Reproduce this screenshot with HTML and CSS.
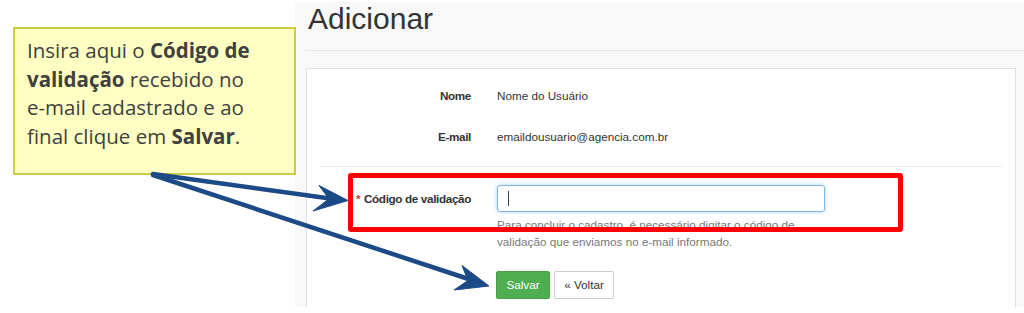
FILE: index.html
```html
<!DOCTYPE html>
<html lang="pt-BR">
<head>
<meta charset="utf-8">
<title>Adicionar</title>
<link rel="stylesheet" href="styles.css">
</head>
<body>
<div class="screen">
  <div class="aside"></div>
  <main class="content">
    <h1 class="title">Adicionar</h1>
    <div class="panel">
      <div class="row">
        <div class="label">Nome</div>
        <div class="value">Nome do Usuário</div>
      </div>
      <div class="row">
        <div class="label">E-mail</div>
        <div class="value">emaildousuario@agencia.com.br</div>
      </div>
      <div class="sep"></div>
      <div class="row row-field">
        <div class="label label-field"><span class="req">*</span> Código de validação</div>
        <div class="field">
          <div class="input"><span class="caret"></span></div>
          <p class="help">Para concluir o cadastro, é necessário digitar o código de validação que enviamos no e-mail informado.</p>
          <div class="actions">
            <span class="btn btn-save">Salvar</span>
            <span class="btn btn-back">« Voltar</span>
          </div>
        </div>
      </div>
    </div>
  </main>

  <div class="callout">Insira aqui o <b>Código de validação</b> recebido no <span class="nowrap">e-mail</span> cadastrado e ao final clique em <b>Salvar</b>.</div>
  <div class="highlight"></div>
  <svg class="arrows" width="1024" height="313" viewBox="0 0 1024 313">
    <g fill="#1b4a87" stroke="#1b4a87">
      <line x1="153" y1="174" x2="330" y2="198.6" stroke-width="4.5" stroke-linecap="round"/>
      <path d="M348,200.5 L319,185.5 L329,198.8 L313,211 Z" stroke-width="1" stroke-linejoin="round"/>
      <line x1="153" y1="175" x2="470" y2="279.5" stroke-width="4.5" stroke-linecap="round"/>
      <path d="M489,286 L462,265.5 L468,280.5 L454,290 Z" stroke-width="1" stroke-linejoin="round"/>
    </g>
  </svg>
</div>
</body>
</html>
```
FILE: styles.css
```css
html, body {
  margin: 0;
  padding: 0;
  background: #ffffff;
}
body {
  width: 1024px;
  height: 313px;
  overflow: hidden;
  font-family: "Liberation Sans", Arial, sans-serif;
  color: #333333;
}
.screen {
  position: relative;
  width: 1024px;
  height: 313px;
  display: flex;
  padding-top: 2px;
  box-sizing: border-box;
}
.aside {
  width: 295px;
  flex: none;
  background: #ffffff;
}
.content {
  flex: 1;
  height: 305px;
  background: #f8f8f8;
  padding-left: 10px;
  display: flex;
  flex-direction: column;
  overflow: hidden;
}
.title {
  margin: 0;
  padding: 0 0 0 3px;
  height: 48px;
  line-height: 34px;
  font-size: 30px;
  font-weight: normal;
  color: #333333;
  border-bottom: 1px solid #e6e6e6;
}
.panel {
  margin-top: 17px;
  margin-left: 1px;
  margin-right: 8px;
  flex: 1;
  background: #ffffff;
  border: 1px solid #e0e0e0;
  border-bottom: none;
  padding-top: 17px;
  font-size: 11.7px;
}
.row {
  display: grid;
  grid-template-columns: 164px 1fr;
  column-gap: 26px;
  line-height: 20px;
  margin-bottom: 21px;
}
.label {
  text-align: right;
  font-weight: bold;
  letter-spacing: -0.35px;
}
.value {
  color: #333333;
}
.sep {
  height: 1px;
  background: #ececec;
  margin: -2px 12px 18px 13px;
}
.row-field {
  margin-bottom: 0;
}
.label-field {
  line-height: 27px;
}
.req {
  color: #e0312f;
  margin-right: 1px;
}
.field {
  width: 328px;
}
.input {
  height: 27px;
  box-sizing: border-box;
  border: 1px solid #7eb6e6;
  border-radius: 3px;
  box-shadow: 0 0 4px rgba(102, 175, 233, 0.55);
  padding: 5px 0 0 10px;
}
.caret {
  display: block;
  width: 1px;
  height: 15px;
  background: #444444;
}
.help {
  margin: 4px 0 0 0;
  line-height: 17px;
  color: #777777;
}
.actions {
  display: flex;
  gap: 4px;
  margin-top: 21px;
  margin-left: -1px;
}
.btn {
  display: inline-flex;
  align-items: center;
  justify-content: center;
  height: 28px;
  box-sizing: border-box;
  border-radius: 2px;
  font-size: 11.7px;
}
.btn-save {
  width: 54px;
  background: #4fae50;
  border: 1px solid #46a047;
  color: #ffffff;
}
.btn-back {
  width: 60px;
  background: #ffffff;
  border: 1px solid #cccccc;
  color: #333333;
}

.callout {
  position: absolute;
  left: 13px;
  top: 27px;
  width: 283px;
  height: 148px;
  box-sizing: border-box;
  background: #ffffc4;
  border: 2px solid #cccc45;
  padding: 7px 10px 0 12px;
  font-family: "Open Sans", "Liberation Sans", sans-serif;
  font-size: 20.5px;
  line-height: 28.5px;
  color: #404040;
}
.callout b {
  font-weight: bold;
}
.nowrap {
  white-space: nowrap;
}
.highlight {
  position: absolute;
  left: 348px;
  top: 173px;
  width: 555px;
  height: 59px;
  box-sizing: border-box;
  border: 5px solid #ff0000;
  border-radius: 3px;
}
.arrows {
  position: absolute;
  left: 0;
  top: 0;
  pointer-events: none;
}
```
